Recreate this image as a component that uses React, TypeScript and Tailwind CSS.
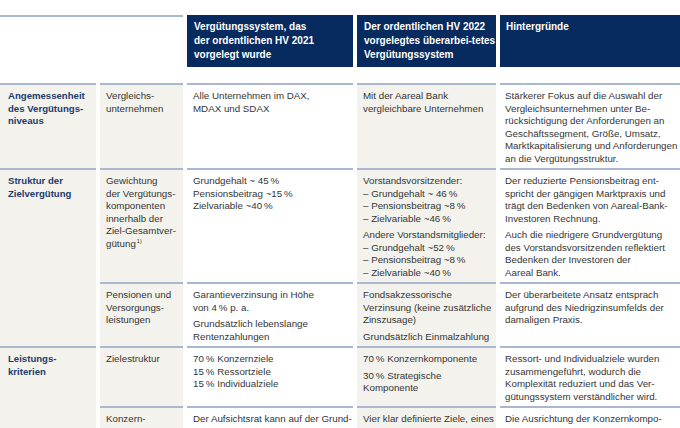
import React from "react";

// Cell text: each entry is one paragraph, each paragraph a list of lines.
type Para = React.ReactNode[];

const ROW = "border-t-2 border-[#a9b8ce] pt-[5px] pb-[3px]";
const BEIGE = "bg-[#f3f2ec]";

function Lines({ paras }: { paras: Para[] }) {
  return (
    <div className="flex flex-col gap-[4px]">
      {paras.map((p, i) => (
        <p key={i} className="whitespace-nowrap">
          {p.map((line, j) => (
            <React.Fragment key={j}>
              {line}
              {j < p.length - 1 && <br />}
            </React.Fragment>
          ))}
        </p>
      ))}
    </div>
  );
}

function Label({ lines, span = false }: { lines: string[]; span?: boolean }) {
  return (
    <div
      className={`${span ? "row-span-2" : ""} ${ROW} ${BEIGE} pl-[8px] text-[9.6px] font-bold text-[#1d3b6d]`}
    >
      <Lines paras={[lines]} />
    </div>
  );
}

function Cell({
  paras,
  beige = false,
  pad = "pl-[6px]",
}: {
  paras: Para[];
  beige?: boolean;
  pad?: string;
}) {
  return (
    <div className={`${ROW} ${pad} ${beige ? BEIGE : "bg-white"}`}>
      <Lines paras={paras} />
    </div>
  );
}

const P = "\u2009%";

export default function App() {
  return (
    <div
      className="w-[680px] h-[428px] overflow-hidden bg-white pt-[15px] text-[9.75px] leading-[12.5px] text-[#353535]"
      style={{ fontFamily: '"Liberation Sans", Arial, sans-serif' }}
    >
      {/* header */}
      <div className="grid grid-cols-[96px_83px_166px_139px_1fr] gap-x-[4px]">
        <div className="col-span-2 border-t-2 border-[#a9b8ce]" />
        {[
          ["Vergütungssystem, das", "der ordentlichen HV 2021", "vorgelegt wurde"],
          ["Der ordentlichen HV 2022", "vorgelegtes überarbei-tetes", "Vergütungssystem"],
          ["Hintergründe"],
        ].map((h, i) => (
          <div
            key={i}
            className={`h-[52px] bg-[#072b5e] pt-[5px] text-[10px] leading-[14px] font-bold text-white whitespace-nowrap ${
              i === 2 ? "pl-[6px]" : "pl-[7px]"
            }`}
          >
            {h.map((l, j) => (
              <div key={j}>{l}</div>
            ))}
          </div>
        ))}
      </div>

      {/* body */}
      <div className="mt-[16px] grid grid-cols-[96px_83px_166px_139px_1fr] gap-x-[4px]">
        {/* Angemessenheit */}
        <Label lines={["Angemessenheit", "des Vergütungs-", "niveaus"]} />
        <Cell beige paras={[["Vergleichs-", "unternehmen"]]} />
        <Cell paras={[["Alle Unternehmen im DAX,", "MDAX und SDAX"]]} />
        <Cell beige paras={[["Mit der Aareal Bank", "vergleichbare Unternehmen"]]} />
        <Cell
          pad="pl-[5px]"
          paras={[
            [
              "Stärkerer Fokus auf die Auswahl der",
              "Vergleichsunternehmen unter Be-",
              "rücksichtigung der Anforderungen an",
              "Geschäftssegment, Größe, Umsatz,",
              "Marktkapitalisierung und Anforderungen",
              "an die Vergütungsstruktur.",
            ],
          ]}
        />

        {/* Struktur der Zielvergütung */}
        <Label span lines={["Struktur der", "Zielvergütung"]} />
        <Cell
          beige
          paras={[
            [
              "Gewichtung",
              "der Vergütungs-",
              "komponenten",
              "innerhalb der",
              "Ziel-Gesamtver-",
              <>
                gütung<span className="relative -top-[4px] ml-[1px] text-[5.5px]">1)</span>
              </>,
            ],
          ]}
        />
        <Cell paras={[[`Grundgehalt ~ 45${P}`, `Pensionsbeitrag ~15${P}`, `Zielvariable ~40${P}`]]} />
        <Cell
          beige
          paras={[
            [
              "Vorstandsvorsitzender:",
              `– Grundgehalt ~ 46${P}`,
              `– Pensionsbeitrag ~8${P}`,
              `– Zielvariable ~46${P}`,
            ],
            [
              "Andere Vorstandsmitglieder:",
              `– Grundgehalt ~52${P}`,
              `– Pensionsbeitrag ~8${P}`,
              `– Zielvariable ~40${P}`,
            ],
          ]}
        />
        <Cell
          pad="pl-[5px]"
          paras={[
            [
              "Der reduzierte Pensionsbeitrag ent-",
              "spricht der gängigen Marktpraxis und",
              "trägt den Bedenken von Aareal-Bank-",
              "Investoren Rechnung.",
            ],
            [
              "Auch die niedrigere Grundvergütung",
              "des Vorstandsvorsitzenden reflektiert",
              "Bedenken der Investoren der",
              "Aareal Bank.",
            ],
          ]}
        />

        <Cell beige paras={[["Pensionen und", "Versorgungs-", "leistungen"]]} />
        <Cell
          paras={[
            ["Garantieverzinsung in Höhe", `von 4${P} p. a.`],
            ["Grundsätzlich lebenslange", "Rentenzahlungen"],
          ]}
        />
        <Cell
          beige
          paras={[
            ["Fondsakzessorische", "Verzinsung (keine zusätzliche", "Zinszusage)"],
            ["Grundsätzlich Einmalzahlung"],
          ]}
        />
        <Cell
          pad="pl-[5px]"
          paras={[
            [
              "Der überarbeitete Ansatz entsprach",
              "aufgrund des Niedrigzinsumfelds der",
              "damaligen Praxis.",
            ],
          ]}
        />

        {/* Leistungskriterien */}
        <Label span lines={["Leistungs-", "kriterien"]} />
        <Cell beige paras={[["Zielestruktur"]]} />
        <Cell
          paras={[[`70${P} Konzernziele`, `15${P} Ressortziele`, `15${P} Individualziele`]]}
        />
        <Cell
          beige
          paras={[[`70${P} Konzernkomponente`], [`30${P} Strategische`, "Komponente"]]}
        />
        <Cell
          pad="pl-[5px]"
          paras={[
            [
              "Ressort- und Individualziele wurden",
              "zusammengeführt, wodurch die",
              "Komplexität reduziert und das Ver-",
              "gütungssystem verständlicher wird.",
            ],
          ]}
        />

        <Cell beige paras={[["Konzern-", "komponente"]]} />
        <Cell
          paras={[["Der Aufsichtsrat kann auf der Grund-", "lage der Unternehmensplanung"]]}
        />
        <Cell
          beige
          paras={[["Vier klar definierte Ziele, eines", "davon der RoE (40 %) sowie"]]}
        />
        <Cell
          pad="pl-[5px]"
          paras={[["Die Ausrichtung der Konzernkompo-", "nente auf vier klar definierte Ziele"]]}
        />
      </div>
    </div>
  );
}
